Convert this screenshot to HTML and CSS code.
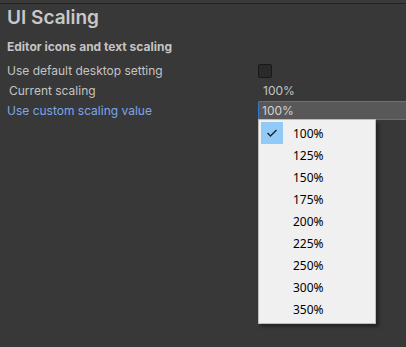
FILE: index.html
```html
<!DOCTYPE html>
<html lang="en">
<head>
  <meta charset="UTF-8">
  <title>UI Scaling</title>
  <link rel="stylesheet" href="styles.css">
</head>
<body>

<div class="topline"></div>

<div class="panel">
  <h1>UI Scaling</h1>
  <h2>Editor icons and text scaling</h2>

  <div class="row first">
    <span class="label">Use default desktop setting</span>
    <span class="checkbox"></span>
  </div>
  <div class="row">
    <span class="label indent">Current scaling</span>
    <span class="value">100%</span>
  </div>
  <div class="row">
    <span class="label active">Use custom scaling value</span>
    <span class="field">100%</span>
  </div>
</div>

<!-- Popup list of scaling values -->
<ul class="menu">
  <li class="selected"><span class="tick"><svg width="12" height="10" viewBox="0 0 12 10"><path d="M1.5 5 L4.5 8 L10.5 2" fill="none" stroke="#222" stroke-width="1.4"/></svg></span>100%</li>
  <li><span class="tick"></span>125%</li>
  <li><span class="tick"></span>150%</li>
  <li><span class="tick"></span>175%</li>
  <li><span class="tick"></span>200%</li>
  <li><span class="tick"></span>225%</li>
  <li><span class="tick"></span>250%</li>
  <li><span class="tick"></span>300%</li>
  <li><span class="tick"></span>350%</li>
</ul>

</body>
</html>
```

FILE: styles.css
```css
body {
  margin: 0;
  background-color: #383838;
  font-family: Inter, "Noto Sans", sans-serif;
  color: #c4c4c4;
  height: 347px;
  overflow: hidden;
}

.topline {
  height: 3px;
  border-bottom: 1px solid #232323;
  background-color: #3a3a3a;
}

.panel {
  padding: 0 0 0 7px;
}

h1 {
  margin: 2px 0 0;
  font-size: 19px;
  font-weight: 600;
  line-height: 24px;
  color: #c8c8c8;
}

h2 {
  margin: 10px 0 0;
  font-size: 12px;
  font-weight: 700;
  line-height: 14px;
  color: #c4c4c4;
}

.row {
  display: grid;
  grid-template-columns: 251px 1fr;
  align-items: center;
  height: 20px;
}

.row.first {
  margin-top: 7px;
  height: 19px;
}

.label {
  font-size: 12px;
}

.label.indent {
  padding-left: 2px;
}

.label.active {
  color: #7ba7ea;
}

.checkbox {
  width: 12px;
  height: 12px;
  border: 1px solid #191919;
  background-color: #2a2a2a;
  border-radius: 2px;
}

.value {
  font-size: 12px;
  padding-left: 5px;
}

.field {
  font-size: 12px;
  height: 17px;
  line-height: 17px;
  padding-left: 3px;
  background-color: #585858;
  border: 1px solid #3a79bb;
  border-right: none;
  border-radius: 2px 0 0 2px;
  color: #d2d2d2;
}

.menu {
  position: absolute;
  left: 258px;
  top: 119px;
  width: 114px;
  margin: 0;
  padding: 2px 0 3px 2px;
  list-style: none;
  background-color: #f0f0f0;
  border: 1px solid #bdbdbd;
  box-shadow: 3px 3px 3px rgba(0, 0, 0, 0.35);
  font-family: "Noto Sans", "Open Sans", sans-serif;
  font-size: 12px;
  color: #000;
}

.menu li {
  display: flex;
  align-items: center;
  height: 22px;
}

.tick {
  width: 22px;
  height: 22px;
  margin-right: 10px;
  display: flex;
  align-items: center;
  justify-content: center;
}

.menu li.selected .tick {
  background-color: #91c9f7;
}
```
